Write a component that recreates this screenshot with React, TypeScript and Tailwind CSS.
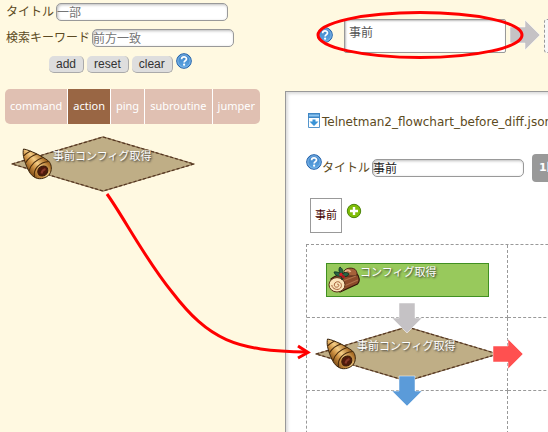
import React from "react";

const sans = "font-['Noto_Sans','Noto_Sans_CJK_JP',sans-serif]";

function Help() {
  return (
    <svg viewBox="0 0 16 16" className="block size-4 shrink-0" aria-hidden="true">
      <defs>
        <linearGradient id="help" x1="0" y1="0" x2="0" y2="1">
          <stop offset="0" stopColor="#3f82c6" />
          <stop offset="1" stopColor="#5da7e4" />
        </linearGradient>
      </defs>
      <circle cx="8" cy="8" r="7.3" fill="url(#help)" stroke="#1d5ea8" />
      <circle cx="8" cy="8" r="6.2" fill="none" stroke="#8dbdea" strokeWidth=".8" />
      <path d="M5.6 6.2C5.6 3.2 10.5 3.2 10.5 6C10.5 7.6 8.1 7.8 8.1 9.6" fill="none" stroke="#fff" strokeWidth="1.7" />
      <circle cx="8.1" cy="11.7" r="1.1" fill="#fff" />
    </svg>
  );
}

function HelpButton() {
  return (
    <button type="button" aria-label="help" className="shrink-0">
      <Help />
    </button>
  );
}

function Cornet() {
  return (
    <svg viewBox="0 0 32 32" className="block size-8" aria-hidden="true">
      <defs>
        <linearGradient id="cornet" gradientUnits="userSpaceOnUse" x1="5" y1="22" x2="21" y2="9">
          <stop offset="0" stopColor="#7c4a14" />
          <stop offset=".35" stopColor="#cf9344" />
          <stop offset=".6" stopColor="#f4cd85" />
          <stop offset="1" stopColor="#a96d26" />
        </linearGradient>
      </defs>
      <path d="M1.5 1C5 1.5 9.5 3.5 14 5.5C18 7.500 22.5 10 26.5 13C29.5 16 30 20.500 28.500 24.500C26.500 29 20.500 31.500 15.500 30.500C11.500 29.500 8.500 26.500 6.500 22.500C4 17.500 2.500 13 1.500 8.500C1 5.500 1 3 1.500 1Z" fill="url(#cornet)" stroke="#3a240c" />
      <path d="M1.500 8C3.500 6 6 4.300 8.500 3M3.500 15C6 10.500 10 7.500 15 6M7 23C8.500 17 13.500 12 21 9.500M12.500 29C11 21.500 17 14 27 13.500" fill="none" stroke="#4a2c0c" strokeWidth="1.100" />
      <ellipse cx="20.800" cy="23" rx="5.400" ry="4.700" transform="rotate(-45 20.800 23)" fill="#4f190b" stroke="#3a1c0a" />
      <path d="M19.500 25.500C20 23 21.500 21.500 23.500 21" fill="none" stroke="#86392a" strokeWidth="2" />
    </svg>
  );
}

function YuleLog() {
  return (
    <svg viewBox="0 0 32 28" className="block h-7 w-8" aria-hidden="true">
      <path d="M3 13C9 8 22 5 28 7C32 10 32 16 29.5 18L12 26Z" fill="#8c4b2b" stroke="#32160a" strokeWidth="1.2" />
      <path d="M16 5C18 1.500 26 1 28 4.500C30 8 29 10 26 10L17 10Z" fill="#a5613a" stroke="#4a2716" />
      <path d="M15 15L28 10M16 20L30 14" stroke="#b0714a" strokeWidth="1.2" />
      <path d="M17 6C18 3.500 21 3.500 22.500 6" stroke="#e4b58b" fill="none" strokeWidth="2" />
      <ellipse cx="9" cy="18.800" rx="8" ry="7.200" fill="#fae3bb" stroke="#5c3018" />
      <path d="M9 18.500C10.500 17 12 20 9.500 21C6 22 5 17.500 8.300 16C12 14.500 15 19 12.500 22C10 25 4 23 3.800 19" fill="none" stroke="#a5613a" />
      <path d="M13 10C9 11 7 9 6 6C9 5.500 11 6.500 12.500 8C10.500 5 10.500 3 12 1C15 3 15.500 5.500 14 8C16.500 6 19 6 21 8C19.500 11 16.500 11 14.500 10C15.500 11.500 15 13 14 14Z" fill="#286444" stroke="#0d2e20" strokeWidth=".8" />
      <circle cx="13" cy="8.500" r="1.700" fill="#d31e25" />
      <circle cx="15.200" cy="10.600" r="1.600" fill="#b7141b" />
    </svg>
  );
}

function ActionNode({ label }: { label: string }) {
  return (
    <div className="relative h-14 w-[184px]">
      <svg viewBox="0 0 184 56" className="block h-full w-full" aria-hidden="true">
        <path d="M1 28L92 1L183 28L92 55Z" fill="#bfae86" stroke="#8a7050" strokeWidth="1.2" />
        <path d="M1 28L92 1L183 28L92 55Z" fill="none" stroke="#543621" strokeWidth="1.2" strokeDasharray="3 2" />
      </svg>
      <div className="absolute top-3 left-[11px]">
        <Cornet />
      </div>
      <span className="absolute top-3 left-[42px] text-[11px] leading-4 whitespace-nowrap text-white [text-shadow:1px_1px_2px_#333]">{label}</span>
    </div>
  );
}

function Arrow({ fill, className }: { fill: string; className: string }) {
  return (
    <svg viewBox="0 0 32 32" className={"block size-8 " + className} aria-hidden="true">
      <path d="M1 8H16V1L31 16L16 31V24H1Z" fill={fill} stroke="#fff" strokeOpacity=".5" />
    </svg>
  );
}

const field = "h-[18px] rounded-[5px] border border-[#999] bg-white text-xs leading-4 outline-none shadow-[inset_1px_1px_3px_#bbb] placeholder:text-[#757575]";
const smallButton = "h-[17px] rounded-[5px] border-r border-b border-[#aaa] bg-[#dedede] px-[7px] font-['Liberation_Sans',sans-serif] text-xs leading-4 text-[#333]";
const tabs = ["command", "action", "ping", "subroutine", "jumper"];

function Sidebar() {
  return (
    <aside className="w-[285px] shrink-0 pt-[3px] pl-[5px]">
      <div className="flex h-[18px] items-center">
        <label htmlFor="find-title" className="w-[51px] pl-px leading-4">タイトル</label>
        <input id="find-title" placeholder="一部" className={field + " w-[172px]"} />
      </div>
      <div className="mt-2 flex h-[18px] items-center">
        <label htmlFor="find-key" className="w-[87px] pl-px leading-4 whitespace-nowrap">検索キーワード</label>
        <input id="find-key" placeholder="前方一致" className={field + " w-[142px]"} />
      </div>
      <div className="mt-[6px] ml-11 flex h-5 items-end gap-[3px]">
        <button type="button" className={smallButton}>add</button>
        <button type="button" className={smallButton}>reset</button>
        <button type="button" className={smallButton}>clear</button>
        <div className="self-start">
          <HelpButton />
        </div>
      </div>
      <nav className="mt-4 flex h-[35px] w-fit divide-x divide-white overflow-hidden rounded-[5px] bg-[#e0c0b2] text-[11px] text-white">
        {tabs.map((t) => (
          <button key={t} type="button" className={t === "action" ? "bg-[#996644] px-[5px]" : "px-[5px]"}>{t}</button>
        ))}
      </nav>
      <div className="mt-3 ml-[6px]">
        <ActionNode label="事前コンフィグ取得" />
      </div>
    </aside>
  );
}

const cell = "relative h-[73px] border-r border-b border-dashed border-[#999]";

function Flowchart() {
  return (
    <div className="mt-[11px] ml-5 grid w-[402px] grid-cols-2 border-t border-l border-dashed border-[#999]">
      <div className={cell}>
        <div className="absolute top-[18px] left-[19px] flex h-[34px] w-[163px] border border-[#419022] bg-[#98c95c]">
          <div className="pt-[2px] pl-px">
            <YuleLog />
          </div>
          <span className="text-[11px] leading-4 text-white [text-shadow:1px_1px_2px_#333]">コンフィグ取得</span>
        </div>
      </div>
      <div className={cell} />
      <div className={cell}>
        <div className="absolute top-2 left-2">
          <ActionNode label="事前コンフィグ取得" />
        </div>
        <Arrow fill="#c5c2c5" className="absolute -top-4 left-[84px] rotate-90" />
        <Arrow fill="#5b9bd9" className="absolute top-[57px] left-[84px] z-10 rotate-90" />
        <Arrow fill="#ff5050" className="absolute top-5 left-[185px] z-10" />
      </div>
      <div className={cell} />
      <div className={cell} />
      <div className={cell} />
    </div>
  );
}

export default function App() {
  return (
    <div className={"relative flex h-screen overflow-hidden bg-[#fff9e1] text-xs text-[#5c4a22] " + sans}>
      <Sidebar />
      <main className="flex min-w-0 flex-1 flex-col">
        <div className="flex shrink-0 items-start pt-[19px] pb-[38px] pl-8">
          <div className="mt-2">
            <HelpButton />
          </div>
          <textarea aria-label="title list" defaultValue="事前" className="ml-[11px] h-[34px] w-[162px] shrink-0 resize-none rounded-[2px] border border-[#999] bg-white px-1 py-[5px] leading-4 text-[#555] outline-none shadow-[inset_1px_1px_2px_#bbb]" />
          <Arrow fill="#c5c2c5" className="mx-[3px] shrink-0" />
          <div className="h-[34px] w-[162px] shrink-0 rounded-[3px] border border-dashed border-[#999] bg-[#f8f8f8]" />
        </div>
        <section className="min-h-0 flex-1 border-t border-l border-[#999] bg-white shadow-[inset_2px_2px_3px_#ddd]">
          <a href="#file" className="mt-[19px] ml-[22px] flex h-5 items-center whitespace-nowrap">
            <svg viewBox="0 0 12 16" className="mr-[2px] h-4 w-3 shrink-0" aria-hidden="true">
              <path d="M.5 .5H11.5V14.500H.5Z" fill="#fff" stroke="#5696cc" />
              <path d="M0 0H12V5H0Z" fill="#3f86c4" />
              <path d="M1 2.500H11" stroke="#8dc6f2" strokeWidth="2" />
              <path d="M4.500 6.500H7.500V8.500H10.500L6 13L1.500 8.500H4.500Z" fill="#3a93d6" />
            </svg>
            <span className="pt-px font-['DejaVu_Sans',sans-serif] leading-4">Telnetman2_flowchart_before_diff.json</span>
          </a>
          <div className="mt-[23px] ml-5 flex h-7 items-center">
            <div className="self-start">
              <HelpButton />
            </div>
            <label htmlFor="flow-title" className="w-[50px] shrink-0 leading-4">タイトル</label>
            <input id="flow-title" defaultValue="事前" className={field + " w-[152px] shrink-0 text-[#222]"} />
            <button type="button" className="ml-2 h-7 shrink-0 rounded-[4px] bg-[#999] px-[7px] font-['DejaVu_Sans','Noto_Sans_CJK_JP',sans-serif] text-[11px] font-bold text-white">1回</button>
          </div>
          <div className="mt-4 ml-6 flex h-[35px]">
            <button type="button" className="w-8 border border-[#999] text-[11px] whitespace-nowrap text-[#400]">事前</button>
            <button type="button" aria-label="add routine" className="mt-[5px] ml-1 self-start">
              <svg viewBox="0 0 16 16" className="block size-4" aria-hidden="true">
                <circle cx="8" cy="8" r="6.7" fill="#80bd08" stroke="#4c850b" />
                <path d="M8 4V12M4 8H12" stroke="#fff" strokeWidth="2.4" />
              </svg>
            </button>
          </div>
          <Flowchart />
        </section>
      </main>
      <svg viewBox="0 0 548 432" className="pointer-events-none absolute top-0 left-0 z-20 h-[432px] w-[548px]" fill="none" stroke="#f00" strokeWidth="3" aria-hidden="true">
        <ellipse cx="420" cy="35" rx="102" ry="22.5" />
        <path d="M107 194C123 216 145 259 172 292C209 340 235 351 307 352" />
        <path d="M298 346L308 352.5L298 358" />
      </svg>
    </div>
  );
}
